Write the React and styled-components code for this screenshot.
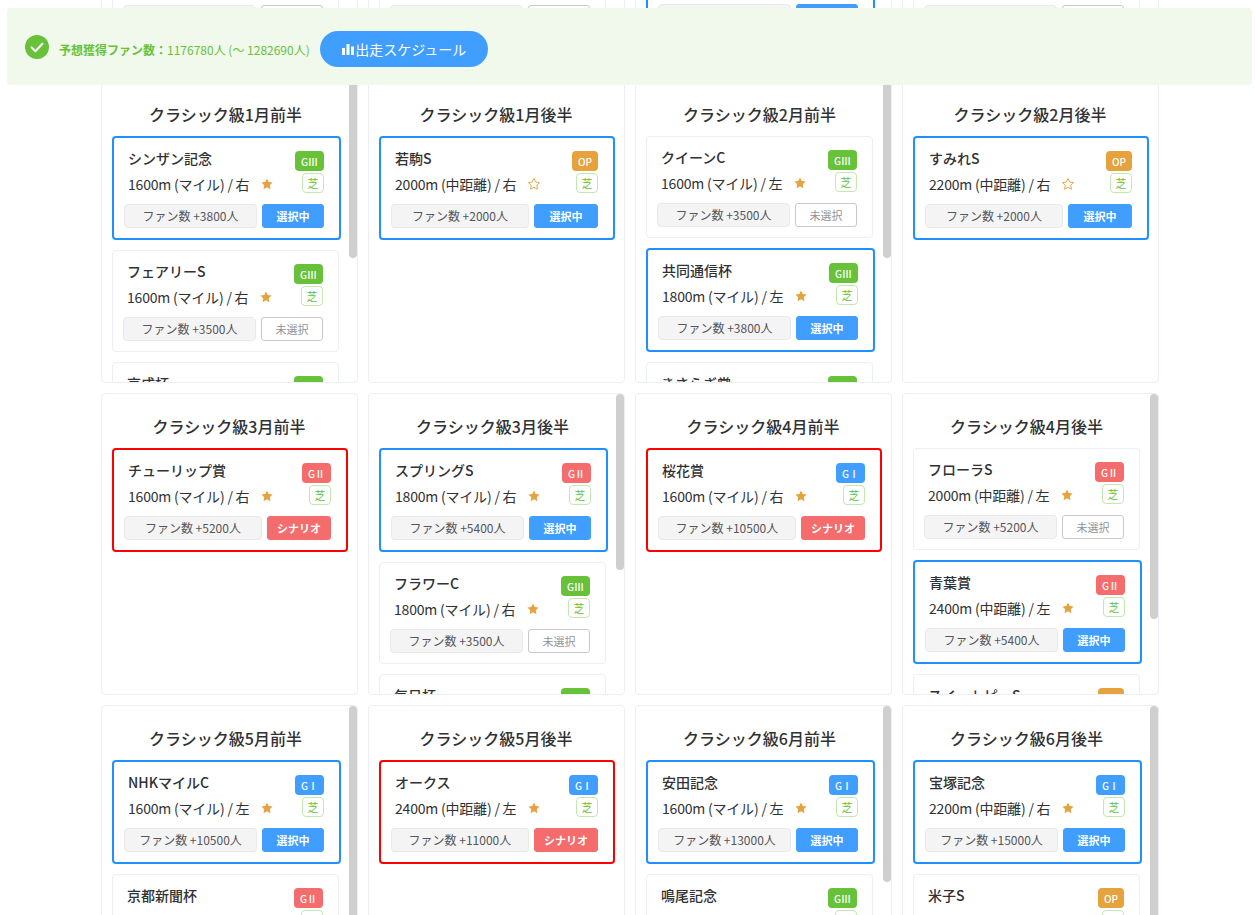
import styled, { createGlobalStyle } from 'styled-components';

const GlobalStyle = createGlobalStyle`
  html, body {
    margin: 0;
    padding: 0;
    background: #fff;
    font-family: "Noto Sans CJK JP", "Noto Sans", sans-serif;
    color: #303133;
  }
`;

const Page = styled.div`
  position: relative;
  height: 100vh;
  overflow: hidden;
`;

const Board = styled.div`
  display: grid;
  grid-template-columns: repeat(4, 257px);
  grid-auto-rows: 302px;
  gap: 10px;
  margin: -231px 0 0 101px;
`;

const Panel = styled.section`
  position: relative;
  box-sizing: border-box;
  border: 1px solid #ebeef5;
  border-radius: 4px;
  background: #fff;
  overflow: hidden;
  padding: 0 ${(p) => (p.$scrolls ? '18px' : '11px')} 0 10px;
`;

const Thumb = styled.div`
  position: absolute;
  top: 0;
  right: 0;
  width: 8px;
  height: ${(p) => p.$height}px;
  border-radius: 4px;
  background: #cfcfcf;
`;

const Heading = styled.h3`
  margin: 0;
  height: 54px;
  padding-top: 19px;
  box-sizing: border-box;
  font-size: 16px;
  line-height: 26px;
  font-weight: 500;
  text-align: center;
  color: #303133;
`;

const CardList = styled.div`
  display: flex;
  flex-direction: column;
  gap: 10px;
`;

const Card = styled.article`
  box-sizing: border-box;
  width: ${(p) => (p.$state === 'none' ? '100%' : 'calc(100% + 2px)')};
  border: ${(p) => (p.$state === 'none' ? '1px solid #ebeef5' : p.$state === 'scenario' ? '2px solid #f00' : '2px solid #1e90ff')};
  border-radius: 4px;
  background: #fff;
  padding: 10px 15px 10px 10px;
`;

const CardTop = styled.div`
  display: flex;
  justify-content: space-between;
  height: 42px;
  margin-bottom: 11px;
  padding: 3px 0 0 4px;
`;

const RaceInfo = styled.div`
  min-width: 0;
`;

const RaceName = styled.div`
  font-size: 14px;
  line-height: 20px;
  font-weight: 500;
  margin-top: -3px;
  color: #303133;
`;

const RaceMeta = styled.div`
  display: flex;
  align-items: center;
  font-size: 14px;
  line-height: 20px;
  letter-spacing: -0.2px;
  margin-top: 6px;
  color: #303133;
`;

const StarIcon = styled.svg`
  width: 14px;
  height: 14px;
  margin-left: 11px;
  flex: none;
`;

const Tags = styled.div`
  display: flex;
  flex-direction: column;
  align-items: flex-end;
  gap: 2px;
`;

const gradeColors = { G1: '#409eff', G2: '#f56c6c', G3: '#67c23a', OP: '#e6a23c' };

const Grade = styled.span`
  box-sizing: border-box;
  display: inline-flex;
  align-items: center;
  justify-content: center;
  height: 20px;
  width: ${(p) => (p.$grade === 'OP' ? '26px' : '29px')};
  border-radius: 4px;
  background: ${(p) => gradeColors[p.$grade]};
  color: #fff;
  font-size: 10px;
  font-weight: 500;
  white-space: nowrap;
`;

const Surface = styled.span`
  box-sizing: border-box;
  display: inline-flex;
  align-items: center;
  justify-content: center;
  width: 22px;
  height: 20px;
  border: 1px solid #c2e7b0;
  border-radius: 4px;
  background: #fff;
  color: #67c23a;
  font-size: 11px;
`;

const CardBottom = styled.div`
  display: flex;
  gap: 5px;
`;

const FanCount = styled.div`
  box-sizing: border-box;
  flex: 1;
  height: 24px;
  line-height: 22px;
  border: 1px solid #e9e9eb;
  border-radius: 4px;
  background: #f4f4f5;
  color: #54565a;
  font-size: 12px;
  text-align: center;
  white-space: nowrap;
`;

const PickButton = styled.button`
  box-sizing: border-box;
  width: 31%;
  height: 24px;
  padding: 0;
  border-radius: 3px;
  font-family: inherit;
  font-size: 11px;
  cursor: pointer;
  ${(p) => p.$state === 'none' && 'border: 1px solid #c8c9cc; background: #fff; color: #909399;'}
  ${(p) => p.$state === 'picked' && 'border: 1px solid #409eff; background: #409eff; color: #fff; font-weight: 700;'}
  ${(p) => p.$state === 'scenario' && 'border: 1px solid #f56c6c; background: #f56c6c; color: #fff; font-weight: 700;'}
`;

const Alert = styled.div`
  position: absolute;
  top: 8px;
  left: 7px;
  right: 3px;
  height: 77px;
  display: flex;
  align-items: center;
  box-sizing: border-box;
  padding: 0 18px;
  border-radius: 4px;
  background: #f0f9eb;
  color: #67c23a;
`;

const AlertIcon = styled.svg`
  width: 24px;
  height: 24px;
  flex: none;
  margin-right: 10px;
`;

const AlertText = styled.p`
  margin: 7px 10px 0 0;
  font-size: 12px;
  line-height: 18px;
  white-space: nowrap;

  b {
    font-weight: 700;
  }
`;

const ScheduleButton = styled.button`
  display: inline-flex;
  align-items: center;
  height: 36px;
  width: 168px;
  justify-content: center;
  padding: 0;
  border: none;
  border-radius: 18px;
  background: #409eff;
  color: #fff;
  font-family: inherit;
  font-size: 14px;
  margin-top: 5px;
  cursor: pointer;
`;

const ChartIcon = styled.svg`
  width: 14px;
  height: 14px;
  flex: none;
`;

const card = (name, meta, star, grade, fans, state = 'none') => ({ name, meta, star, grade, fans, state });

const panels = [
  ['ジュニア級11月前半', [
    card('京王杯ジュニアS', '1400m (短距離) / 左', true, 'G2', 5200, 'picked'),
    card('ファンタジーS', '1400m (短距離) / 右', true, 'G3', 3500),
    card('アルテミスS', '1600m (マイル) / 左', false, 'G3', 3500),
    card('萩S', '1800m (マイル) / 右', false, 'OP', 2000),
  ]],
  ['ジュニア級11月後半', [
    card('東京スポーツ杯', '1800m (マイル) / 左', true, 'G3', 3800, 'picked'),
    card('京都ジュニアS', '2000m (中距離) / 右', true, 'G3', 3500),
    card('秋明菊賞', '1400m (短距離) / 右', false, 'OP', 2000),
    card('赤松賞', '1600m (マイル) / 左', false, 'OP', 2000),
  ]],
  ['ジュニア級12月前半', [
    card('カペラS', '1200m (短距離) / 右', false, 'G3', 3500),
    card('阪神JF', '1600m (マイル) / 右', true, 'G1', 10500, 'picked'),
    card('ひいらぎ賞', '1600m (マイル) / 右', false, 'OP', 2000),
    card('リゲルS', '1600m (マイル) / 右', false, 'OP', 2000),
  ]],
  ['ジュニア級12月後半', [
    card('ホープフルS', '2000m (中距離) / 右', true, 'G1', 10500, 'picked'),
    card('朝日杯FS', '1600m (マイル) / 右', true, 'G1', 10500),
    card('阪神C', '1400m (短距離) / 右', false, 'G2', 5200),
    card('万両賞', '1400m (短距離) / 右', false, 'OP', 2000),
  ]],
  ['クラシック級1月前半', [
    card('シンザン記念', '1600m (マイル) / 右', true, 'G3', 3800, 'picked'),
    card('フェアリーS', '1600m (マイル) / 右', true, 'G3', 3500),
    card('京成杯', '2000m (中距離) / 右', true, 'G3', 3500),
    card('紅梅S', '1400m (短距離) / 右', false, 'OP', 2000),
  ]],
  ['クラシック級1月後半', [
    card('若駒S', '2000m (中距離) / 右', false, 'OP', 2000, 'picked'),
  ]],
  ['クラシック級2月前半', [
    card('クイーンC', '1600m (マイル) / 左', true, 'G3', 3500),
    card('共同通信杯', '1800m (マイル) / 左', true, 'G3', 3800, 'picked'),
    card('きさらぎ賞', '1800m (マイル) / 右', true, 'G3', 3500),
    card('ヒヤシンスS', '1600m (マイル) / 左', false, 'OP', 2000),
  ]],
  ['クラシック級2月後半', [
    card('すみれS', '2200m (中距離) / 右', false, 'OP', 2000, 'picked'),
  ]],
  ['クラシック級3月前半', [
    card('チューリップ賞', '1600m (マイル) / 右', true, 'G2', 5200, 'scenario'),
  ]],
  ['クラシック級3月後半', [
    card('スプリングS', '1800m (マイル) / 右', true, 'G2', 5400, 'picked'),
    card('フラワーC', '1800m (マイル) / 右', true, 'G3', 3500),
    card('毎日杯', '1800m (マイル) / 右', true, 'G3', 3500),
    card('若葉S', '2000m (中距離) / 右', false, 'OP', 2000),
  ]],
  ['クラシック級4月前半', [
    card('桜花賞', '1600m (マイル) / 右', true, 'G1', 10500, 'scenario'),
  ]],
  ['クラシック級4月後半', [
    card('フローラS', '2000m (中距離) / 左', true, 'G2', 5200),
    card('青葉賞', '2400m (中距離) / 左', true, 'G2', 5400, 'picked'),
    card('スイートピーS', '1800m (マイル) / 左', false, 'OP', 2000),
  ]],
  ['クラシック級5月前半', [
    card('NHKマイルC', '1600m (マイル) / 左', true, 'G1', 10500, 'picked'),
    card('京都新聞杯', '2200m (中距離) / 右', true, 'G2', 5200),
    card('プリンシパルS', '2000m (中距離) / 左', false, 'OP', 2000),
  ]],
  ['クラシック級5月後半', [
    card('オークス', '2400m (中距離) / 左', true, 'G1', 11000, 'scenario'),
  ]],
  ['クラシック級6月前半', [
    card('安田記念', '1600m (マイル) / 左', true, 'G1', 13000, 'picked'),
    card('鳴尾記念', '2000m (中距離) / 右', true, 'G3', 3500),
    card('マーメイドS', '2000m (中距離) / 右', false, 'G3', 3500),
    card('エプソムC', '1800m (マイル) / 左', false, 'G3', 3500),
  ]],
  ['クラシック級6月後半', [
    card('宝塚記念', '2200m (中距離) / 右', true, 'G1', 15000, 'picked'),
    card('米子S', '1600m (マイル) / 右', false, 'OP', 2000),
    card('パラダイスS', '1400m (短距離) / 左', false, 'OP', 2000),
  ]],
];

const gradeLabels = { G1: 'GⅠ', G2: 'GⅡ', G3: 'GⅢ', OP: 'OP' };
const pickLabels = { none: '未選択', picked: '選択中', scenario: 'シナリオ' };
const thumbHeights = { 3: 225, 4: 176 };

const STAR = 'M12 2.6l2.9 6.1 6.7.9-4.9 4.6 1.2 6.6L12 17.6l-5.9 3.2 1.2-6.6-4.9-4.6 6.7-.9z';

const Star = ({ filled }) => (
  <StarIcon viewBox="0 0 24 24">
    <path d={STAR} fill={filled ? '#e6a23c' : 'none'} stroke="#e6a23c" strokeWidth={filled ? 0 : 1.6} strokeLinejoin="round" />
  </StarIcon>
);

const RaceCard = ({ race }) => (
  <Card $state={race.state}>
    <CardTop>
      <RaceInfo>
        <RaceName>{race.name}</RaceName>
        <RaceMeta>
          {race.meta}
          <Star filled={race.star} />
        </RaceMeta>
      </RaceInfo>
      <Tags>
        <Grade $grade={race.grade}>{gradeLabels[race.grade]}</Grade>
        <Surface>芝</Surface>
      </Tags>
    </CardTop>
    <CardBottom>
      <FanCount>ファン数 +{race.fans}人</FanCount>
      <PickButton $state={race.state}>{pickLabels[race.state]}</PickButton>
    </CardBottom>
  </Card>
);

export default function App() {
  return (
    <Page>
      <GlobalStyle />
      <Board>
        {panels.map(([title, races]) => (
          <Panel key={title} $scrolls={races.length > 1}>
            <Heading>{title}</Heading>
            <CardList>
              {races.map((race) => (
                <RaceCard key={race.name} race={race} />
              ))}
            </CardList>
            {races.length > 1 && <Thumb $height={thumbHeights[races.length]} />}
          </Panel>
        ))}
      </Board>
      <Alert>
        <AlertIcon viewBox="0 0 24 24">
          <circle cx="12" cy="12" r="12" fill="#67c23a" />
          <path d="M6.6 12.4l3.8 3.8 7-7.4" fill="none" stroke="#fff" strokeWidth="2" strokeLinecap="round" strokeLinejoin="round" />
        </AlertIcon>
        <AlertText>
          <b>予想獲得ファン数：</b>1176780人 (〜 1282690人)
        </AlertText>
        <ScheduleButton>
          <ChartIcon viewBox="0 0 14 14">
            <path d="M1 6h3v7H1zM5.500 2h3v11h-3zM10 4.500h3V13h-3z" fill="#fff" />
          </ChartIcon>
          出走スケジュール
        </ScheduleButton>
      </Alert>
    </Page>
  );
}
